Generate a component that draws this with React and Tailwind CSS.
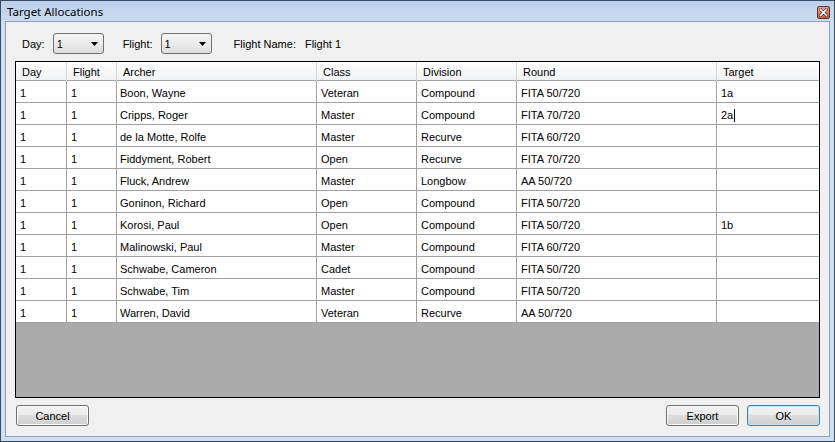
import React from "react";

const rows = [
  ["Boon, Wayne", "Veteran", "Compound", "FITA 50/720", "1a"],
  ["Cripps, Roger", "Master", "Compound", "FITA 70/720", "2a"],
  ["de la Motte, Rolfe", "Master", "Recurve", "FITA 60/720", ""],
  ["Fiddyment, Robert", "Open", "Recurve", "FITA 70/720", ""],
  ["Fluck, Andrew", "Master", "Longbow", "AA 50/720", ""],
  ["Goninon, Richard", "Open", "Compound", "FITA 50/720", ""],
  ["Korosi, Paul", "Open", "Compound", "FITA 50/720", "1b"],
  ["Malinowski, Paul", "Master", "Compound", "FITA 60/720", ""],
  ["Schwabe, Cameron", "Cadet", "Compound", "FITA 50/720", ""],
  ["Schwabe, Tim", "Master", "Compound", "FITA 50/720", ""],
  ["Warren, David", "Veteran", "Recurve", "AA 50/720", ""],
];

const cols = "grid grid-cols-[51px_50px_200px_100px_100px_200px_102px]";

function Combo() {
  return (
    <div className="w-[51px] h-[21px] rounded-[3px] border border-[#707070] bg-gradient-to-b from-[#f4f4f4] via-[#ececec] to-[#dcdcdc] flex items-center justify-between pl-[3px] pr-[5px] pt-px">
      <span>1</span>
      <svg width="7" height="4" viewBox="0 0 7 4">
        <path d="M0 0 H7 L3.5 4 Z" fill="#000" />
      </svg>
    </div>
  );
}

function Button({ children, def }) {
  return (
    <div
      className={
        "w-[73px] h-[21px] rounded-[3px] border flex items-center justify-center pt-px bg-[linear-gradient(to_bottom,#f2f2f2_0%,#ebebeb_45%,#dddddd_50%,#cfcfcf_100%)] " +
        (def ? "border-[#3c7fb1] shadow-[inset_0_0_0_1px_#bfe6f9]" : "border-[#707070] shadow-[inset_0_0_0_1px_#fbfbfb]")
      }
    >
      {children}
    </div>
  );
}

export default function App() {
  return (
    <div
      className="w-[835px] h-[442px] flex flex-col bg-[#cddff2] border border-[#3b4b5d] text-[11px] text-black"
      style={{ fontFamily: '"Liberation Sans", Arial, sans-serif' }}
    >
      <div className="h-[20px] shrink-0 flex items-center justify-between pl-[6px] pr-[4px] bg-gradient-to-b from-[#bcd1ec] to-[#c9dbf1]">
        <span className="text-[11.5px] leading-none pt-[2px]" style={{ fontFamily: '"Noto Sans", sans-serif' }}>
          Target Allocations
        </span>
        <div className="w-[13px] h-[13px] mt-[3px] rounded-[2px] border border-[#6b2e25] bg-gradient-to-b from-[#e4a696] to-[#c25a48] flex items-center justify-center">
          <svg width="9" height="9" viewBox="0 0 9 9">
            <path d="M1.5 1.5 L7.5 7.5 M7.5 1.5 L1.5 7.5" stroke="#5a2018" strokeWidth="3" strokeLinecap="square" />
            <path d="M1.5 1.5 L7.5 7.5 M7.5 1.5 L1.5 7.5" stroke="#fff" strokeWidth="1.6" strokeLinecap="square" />
          </svg>
        </div>
      </div>
      <div className="flex-1 mx-[4px] mb-[4px] border border-[#8ea3bb] bg-[#f0f0f0] flex flex-col">
        <div className="flex items-center mt-[11px] h-[21px] pl-[16px]">
          <span className="pt-px">Day:</span>
          <div className="ml-[8px]"><Combo /></div>
          <span className="ml-[19px] pt-px">Flight:</span>
          <div className="ml-[8px]"><Combo /></div>
          <span className="ml-[22px] pt-px">Flight Name:</span>
          <span className="ml-[9px] pt-px">Flight 1</span>
        </div>
        <div className="mt-[7px] ml-[9px] w-[805px] h-[337px] border border-[#000] bg-[#ababab] flex flex-col">
          <div className={cols + " h-[19px] bg-gradient-to-b from-[#ffffff] to-[#f1f2f4] border-b border-[#a0a0a0]"}>
            {["Day", "Flight", "Archer", "Class", "Division", "Round", "Target"].map((h, i) => (
              <div key={h} className={"flex items-center pl-[6px] pt-[2px] " + (i < 6 ? "border-r border-[#d5d5d5]" : "")}>
                {h}
              </div>
            ))}
          </div>
          {rows.map((r, ri) => (
            <div key={ri} className={cols + " h-[22px] bg-white"}>
              {["1", "1", ...r].map((c, ci) => (
                <div
                  key={ci}
                  className={"flex items-center pt-[3px] border-b border-[#a0a0a0] " + (ci === 2 ? "pl-[3px] " : "pl-[4px] ") + (ci < 6 ? "border-r" : "")}
                >
                  {c}
                  {ri === 1 && ci === 6 ? <span className="inline-block w-px h-[13px] bg-black ml-px" /> : null}
                </div>
              ))}
            </div>
          ))}
        </div>
        <div className="flex mt-[7px] pl-[10px]">
          <Button>Cancel</Button>
          <div className="ml-auto mr-[9px] flex gap-[8px]">
            <Button>Export</Button>
            <Button def>OK</Button>
          </div>
        </div>
      </div>
    </div>
  );
}
